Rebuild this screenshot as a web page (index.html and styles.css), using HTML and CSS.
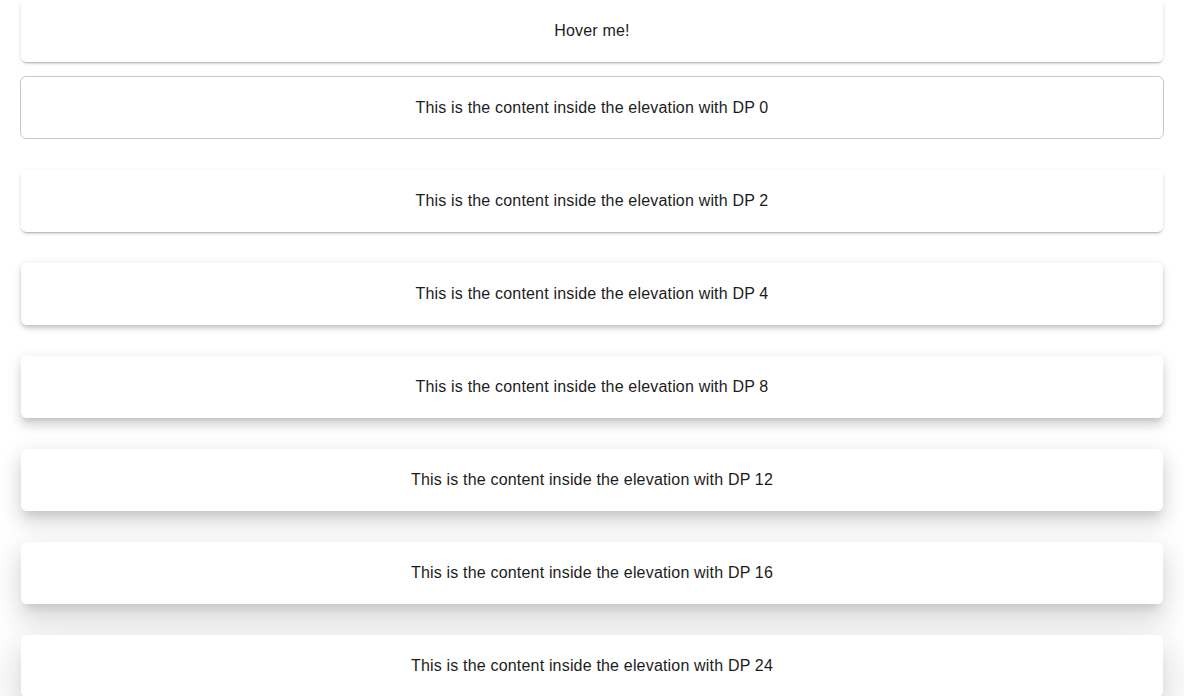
FILE: index.html
```html
<!DOCTYPE html>
<html>
<head>
<meta charset="utf-8">
<link rel="stylesheet" href="styles.css">
</head>
<body>
<div class="page">
  <div class="card hover dp2">Hover me!</div>
  <div class="card dp0">This is the content inside the elevation with DP 0</div>
  <div class="card dp2">This is the content inside the elevation with DP 2</div>
  <div class="card dp4">This is the content inside the elevation with DP 4</div>
  <div class="card dp8">This is the content inside the elevation with DP 8</div>
  <div class="card dp12">This is the content inside the elevation with DP 12</div>
  <div class="card dp16">This is the content inside the elevation with DP 16</div>
  <div class="card dp24">This is the content inside the elevation with DP 24</div>
</div>
</body>
</html>
```
FILE: styles.css
```css
html, body {
  margin: 0;
  padding: 0;
  background: #fff;
}
body {
  font-family: "Liberation Sans", Arial, sans-serif;
  font-size: 16px;
  letter-spacing: 0.18px;
  color: #1c1c1c;
  overflow: hidden;
}
.page {
  display: flex;
  flex-direction: column;
  gap: 31px;
  padding: 0 21px;
}
.card {
  height: 62px;
  display: flex;
  align-items: center;
  justify-content: center;
  background: rgba(255,255,255,0.94);
  border-radius: 6px;
  box-sizing: border-box;
}
.card.hover {
  margin-bottom: -17px;
}
.dp0 {
  background: #fff;
  border: 1px solid #c8c8c8;
  margin: 0 -1px;
  height: 63px;
}
.dp2 {
  box-shadow: 0 3px 1px -2px rgba(0,0,0,.14), 0 2px 2px 0 rgba(0,0,0,.1), 0 1px 5px 0 rgba(0,0,0,.09);
}
.dp4 {
  box-shadow: 0 2px 4px -1px rgba(0,0,0,.14), 0 4px 5px 0 rgba(0,0,0,.1), 0 1px 10px 0 rgba(0,0,0,.09);
}
.dp8 {
  box-shadow: 0 5px 5px -3px rgba(0,0,0,.13), 0 8px 10px 1px rgba(0,0,0,.09), 0 3px 14px 2px rgba(0,0,0,.08);
}
.dp12 {
  box-shadow: 0 7px 8px -4px rgba(0,0,0,.12), 0 12px 17px 2px rgba(0,0,0,.08), 0 5px 22px 4px rgba(0,0,0,.08);
}
.dp16 {
  box-shadow: 0 8px 10px -5px rgba(0,0,0,.12), 0 16px 24px 2px rgba(0,0,0,.08), 0 6px 30px 5px rgba(0,0,0,.08);
}
.dp24 {
  box-shadow: 0 11px 15px -7px rgba(0,0,0,.12), 0 24px 38px 3px rgba(0,0,0,.08), 0 9px 46px 8px rgba(0,0,0,.08);
}
```
